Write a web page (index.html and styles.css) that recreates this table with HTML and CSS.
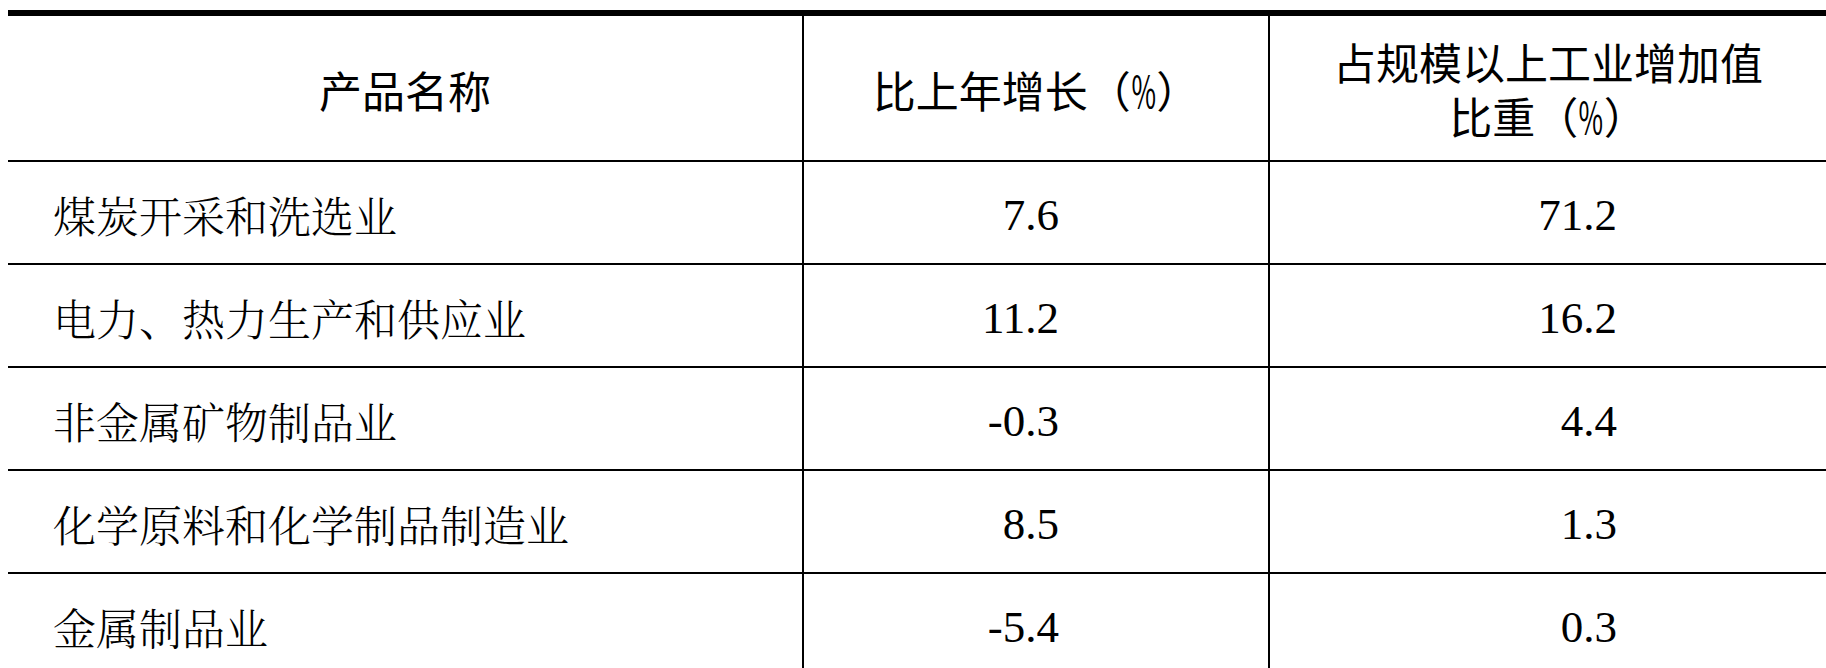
FILE: index.html
```html
<!DOCTYPE html>
<html lang="zh-CN">
<head>
<meta charset="utf-8">
<title>规模以上工业增加值</title>
<link rel="stylesheet" href="styles.css">
</head>
<body>
<div class="table" role="table">
  <div class="cell head" role="columnheader">产品名称</div>
  <div class="cell head sep" role="columnheader">比上年增长（<span class="pct">%</span>）</div>
  <div class="cell head sep two" role="columnheader"><span class="line">占规模以上工业增加值</span><span class="line">比重（<span class="pct">%</span>）</span></div>

  <div class="cell name">煤炭开采和洗选业</div>
  <div class="cell num sep">7.6</div>
  <div class="cell num sep">71.2</div>

  <div class="cell name">电力、热力生产和供应业</div>
  <div class="cell num sep">11.2</div>
  <div class="cell num sep">16.2</div>

  <div class="cell name">非金属矿物制品业</div>
  <div class="cell num sep">-0.3</div>
  <div class="cell num sep">4.4</div>

  <div class="cell name">化学原料和化学制品制造业</div>
  <div class="cell num sep">8.5</div>
  <div class="cell num sep">1.3</div>

  <div class="cell name">金属制品业</div>
  <div class="cell num sep">-5.4</div>
  <div class="cell num sep">0.3</div>
</div>
</body>
</html>
```

FILE: styles.css
```css
html, body {
  margin: 0;
  padding: 0;
  background: #fff;
  overflow: hidden;
}

body {
  padding: 10px 0 0 8px;
  color: #000;
}

.table {
  display: grid;
  grid-template-columns: 794px 466px 558px;
  width: 1818px;
  border-top: 6px solid #000;
}

.cell {
  box-sizing: border-box;
  display: flex;
  align-items: center;
  height: 103px;
  border-top: 2px solid #000;
  padding-top: 4px;
}

.sep {
  border-left: 2px solid #000;
}

.head {
  height: 144px;
  border-top: none;
  justify-content: center;
  text-align: center;
  font-family: "Noto Sans CJK SC", sans-serif;
  font-weight: 400;
  font-size: 43px;
  line-height: 54px;
  padding-top: 2px;
}

.head.two {
  flex-direction: column;
  padding-top: 0;
}

.line {
  display: block;
  line-height: 54px;
}

.pct {
  display: inline-block;
  transform: scaleX(0.62);
  margin: 0 -7px;
}

.name {
  font-family: "Noto Serif CJK SC", "Noto Sans CJK SC", serif;
  font-weight: 300;
  font-size: 43px;
  padding-left: 45px;
}

.num {
  justify-content: flex-end;
  padding-right: 209px;
  font-family: "Liberation Serif", serif;
  font-size: 45px;
}
```
